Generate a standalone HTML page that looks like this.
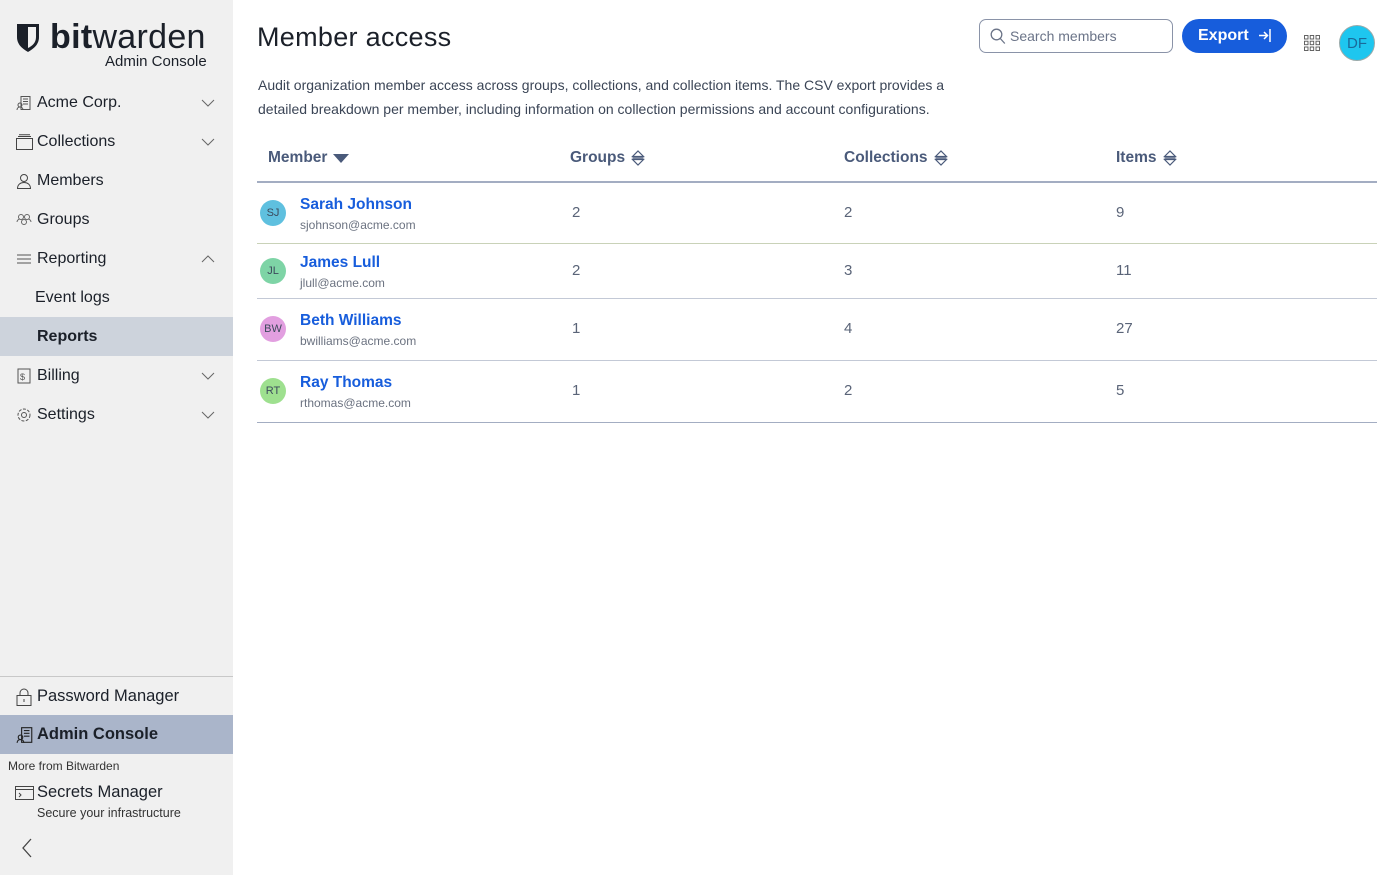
<!DOCTYPE html>
<html><head><meta charset="utf-8"><style>
*{box-sizing:border-box;margin:0;padding:0}
body{width:1400px;height:875px;overflow:hidden;font-family:"Liberation Sans",sans-serif;background:#fff;position:relative;color:#1b2029}
.side{position:absolute;left:0;top:0;width:233px;height:875px;background:#f0f0f0}
.nav{position:absolute;left:0;width:233px;height:39px;display:flex;align-items:center;font-size:16px;color:#1b2029}
.nav svg.i{position:absolute;left:16px}
.nav span{position:absolute;left:37px}
.nav .ch{position:absolute;left:201px}
.main{position:absolute;left:233px;top:0;right:0}
h1{position:absolute;left:24px;top:22px;font-size:27px;font-weight:normal;letter-spacing:.3px;color:#1b2029}
.desc{position:absolute;left:25px;top:74px;font-size:14px;line-height:23.5px;color:#3b4556;width:700px}
.th{position:absolute;top:148px;height:20px;display:flex;align-items:center;gap:6px;font-size:15.5px;font-weight:bold;color:#4a5a7a}
.th svg{display:block}
.row{position:absolute;left:24px;width:1120px;border-bottom:1px solid #c3c9d6}
.av{position:absolute;left:3px;width:26px;height:26px;border-radius:50%;font-size:11px;color:#3c4a5c;display:flex;align-items:center;justify-content:center}
.nm{position:absolute;left:43px;font-size:15.5px;font-weight:bold;color:#175ddc}
.em{position:absolute;left:43px;font-size:12px;color:#6b7280}
.n{position:absolute;font-size:15px;color:#5a6478}
</style></head><body>
<div class="side">
 <svg style="position:absolute;left:16px;top:23px" width="24" height="30" viewBox="0 0 24 30"><path d="M1 1h22v13c0 8-6 12-11 15C7 26 1 22 1 14z" fill="#1b2029"/><path d="M12 4h8v10c0 6-4 9-8 11z" fill="#f0f0f0"/></svg>
 <div style="position:absolute;left:50px;top:18px;font-size:34px;color:#1b2029;letter-spacing:.3px"><b>bit</b>warden</div>
 <div style="position:absolute;left:105px;top:53px;font-size:15px;color:#1b2029">Admin Console</div>
 <div class="nav" style="top:83px"><svg class="i" width="16" height="16" viewBox="0 0 16 16" fill="none" stroke="#555"><rect x="5" y="1.5" width="9" height="13"/><path d="M7 4h5M7 6.5h5M7 9h5"/><circle cx="4" cy="10" r="2"/><path d="M1 15c0-2 1.5-3 3-3s3 1 3 3"/></svg><span>Acme Corp.</span><svg class="ch" width="14" height="8" viewBox="0 0 14 8"><path d="M1 1l6 6 6-6" fill="none" stroke="#666"/></svg></div>
 <div class="nav" style="top:122px"><svg class="i" width="18" height="16" viewBox="0 0 18 16" fill="none" stroke="#444"><rect x=".5" y="4.5" width="16" height="11"/><path d="M2 2.5h13M3 .8h11"/></svg><span>Collections</span><svg class="ch" width="14" height="8" viewBox="0 0 14 8"><path d="M1 1l6 6 6-6" fill="none" stroke="#666"/></svg></div>
 <div class="nav" style="top:161px"><svg class="i" width="16" height="16" viewBox="0 0 16 16" fill="none" stroke="#444"><circle cx="8" cy="5" r="3.5"/><path d="M1.5 15.5c0-4 3-6 6.5-6s6.5 2 6.5 6z"/></svg><span>Members</span></div>
 <div class="nav" style="top:200px"><svg class="i" width="16" height="16" viewBox="0 0 16 16" fill="none" stroke="#666"><circle cx="5" cy="5" r="2.5"/><circle cx="11" cy="5" r="2.5"/><circle cx="8" cy="10" r="2.5"/><path d="M1 10c0-2 2-3 3-3M15 10c0-2-2-3-3-3"/></svg><span>Groups</span></div>
 <div class="nav" style="top:239px"><svg class="i" width="16" height="16" viewBox="0 0 16 16" stroke="#555"><path d="M1 4h14M1 8h14M1 12h14"/></svg><span>Reporting</span><svg class="ch" width="14" height="8" viewBox="0 0 14 8"><path d="M1 7l6-6 6 6" fill="none" stroke="#666"/></svg></div>
 <div class="nav" style="top:278px"><span style="left:35px">Event logs</span></div>
 <div class="nav" style="top:317px;background:#cdd3dc"><span style="font-weight:bold">Reports</span></div>
 <div class="nav" style="top:356px"><svg class="i" width="16" height="16" viewBox="0 0 16 16" fill="none" stroke="#555"><rect x="2" y="1" width="12" height="14"/><text x="4" y="12" font-size="9" fill="#555" stroke="none">$</text></svg><span>Billing</span><svg class="ch" width="14" height="8" viewBox="0 0 14 8"><path d="M1 1l6 6 6-6" fill="none" stroke="#666"/></svg></div>
 <div class="nav" style="top:395px"><svg class="i" width="16" height="16" viewBox="0 0 16 16" fill="none" stroke="#555"><circle cx="8" cy="8" r="2.5"/><circle cx="8" cy="8" r="6" stroke-dasharray="3 1.5"/></svg><span>Settings</span><svg class="ch" width="14" height="8" viewBox="0 0 14 8"><path d="M1 1l6 6 6-6" fill="none" stroke="#666"/></svg></div>
 <div style="position:absolute;left:0;top:676px;width:233px;border-top:1px solid #c8c8c8"></div>
 <div class="nav" style="top:677px"><svg class="i" width="16" height="18" viewBox="0 0 16 18" fill="none" stroke="#444"><rect x="1" y="7.5" width="14" height="10"/><path d="M4 7.5V5a4 4 0 0 1 8 0v2.5M8 11v3"/></svg><span style="font-size:16.5px">Password Manager</span></div>
 <div class="nav" style="top:715px;background:#aab5ca"><svg class="i" width="18" height="18" viewBox="0 0 16 16" fill="none" stroke="#222"><rect x="5" y="1.5" width="9" height="13"/><path d="M7 4h5M7 6.5h5M7 9h5"/><circle cx="4" cy="10" r="2"/><path d="M1 15c0-2 1.5-3 3-3s3 1 3 3"/></svg><span style="font-weight:bold;font-size:16.5px">Admin Console</span></div>
 <div style="position:absolute;left:8px;top:759px;font-size:12px;color:#333">More from Bitwarden</div>
 <svg style="position:absolute;left:15px;top:786px" width="19" height="14" viewBox="0 0 19 14" fill="none" stroke="#444"><rect x=".5" y=".5" width="18" height="13"/><path d="M.5 3.5h18M4 7l2 2-2 2"/></svg>
 <div style="position:absolute;left:37px;top:783px;font-size:16.5px;color:#1b2029">Secrets Manager</div>
 <div style="position:absolute;left:37px;top:806px;font-size:12.5px;color:#333">Secure your infrastructure</div>
 <svg style="position:absolute;left:21px;top:838px" width="12" height="20" viewBox="0 0 12 20"><path d="M10 1L2 10l8 9" fill="none" stroke="#444" stroke-width="1.3"/></svg>
</div>
<div class="main">
 <h1>Member access</h1>
 <div style="position:absolute;left:746px;top:19px;width:194px;height:34px;border:1px solid #8a93a8;border-radius:7px"><svg style="position:absolute;left:10px;top:8px" width="16" height="17" viewBox="0 0 16 17" fill="none" stroke="#6b7488" stroke-width="1.3"><circle cx="6.5" cy="6.5" r="5.3"/><path d="M10.3 10.5l4.5 5"/></svg><div style="position:absolute;left:30px;top:8px;font-size:14px;color:#6b7488">Search members</div></div>
 <div style="position:absolute;left:949px;top:19px;width:105px;height:34px;border-radius:17px;background:#175ddc;color:#fff;font-weight:bold;font-size:16px"><span style="position:absolute;left:16px;top:8px">Export</span><svg style="position:absolute;left:76px;top:9px" width="14" height="15" viewBox="0 0 14 15" fill="none" stroke="#fff" stroke-width="1.5"><path d="M12 1v13M1 7.5h8M6 4l3.5 3.5L6 11"/></svg></div>
 <svg style="position:absolute;left:1071px;top:35px" width="16" height="16" viewBox="0 0 16 16" fill="none" stroke="#555" stroke-width=".9"><rect x=".5" y=".5" width="3.5" height="3.5"/><rect x="6.2" y=".5" width="3.5" height="3.5"/><rect x="12" y=".5" width="3.5" height="3.5"/><rect x=".5" y="6.2" width="3.5" height="3.5"/><rect x="6.2" y="6.2" width="3.5" height="3.5"/><rect x="12" y="6.2" width="3.5" height="3.5"/><rect x=".5" y="12" width="3.5" height="3.5"/><rect x="6.2" y="12" width="3.5" height="3.5"/><rect x="12" y="12" width="3.5" height="3.5"/></svg>
 <div style="position:absolute;left:1106px;top:25px;width:36px;height:36px;border-radius:50%;background:#1ec6ef;border:1px solid #9aa;color:#1a6a9a;font-size:15px;display:flex;align-items:center;justify-content:center">DF</div>
 <div class="desc">Audit organization member access across groups, collections, and collection items. The CSV export provides a detailed breakdown per member, including information on collection permissions and account configurations.</div>
 <div class="th" style="left:35px">Member<svg width="16" height="9" viewBox="0 0 16 9"><path d="M0 0h16L8 9z" fill="#4a5a7a"/></svg></div>
 <div class="th" style="left:337px">Groups<svg width="14" height="16" viewBox="0 0 14 16" fill="none" stroke="#4a5a7a" stroke-width="1.2"><path d="M1.5 6.5L7 1l5.5 5.5zM1.5 9.5L7 15l5.5-5.5zM1.5 8h11"/></svg></div>
 <div class="th" style="left:611px">Collections<svg width="14" height="16" viewBox="0 0 14 16" fill="none" stroke="#4a5a7a" stroke-width="1.2"><path d="M1.5 6.5L7 1l5.5 5.5zM1.5 9.5L7 15l5.5-5.5zM1.5 8h11"/></svg></div>
 <div class="th" style="left:883px">Items<svg width="14" height="16" viewBox="0 0 14 16" fill="none" stroke="#4a5a7a" stroke-width="1.2"><path d="M1.5 6.5L7 1l5.5 5.5zM1.5 9.5L7 15l5.5-5.5zM1.5 8h11"/></svg></div>
 <div style="position:absolute;left:24px;top:181px;width:1120px;border-top:2px solid #a3adc2"></div>
 <div class="row" style="top:183px;height:61px;border-color:#c9d2b8"><div class="av" style="top:17px;background:#5fc0df">SJ</div><div class="nm" style="top:13px">Sarah Johnson</div><div class="em" style="top:35px">sjohnson@acme.com</div><div class="n" style="left:315px;top:21px">2</div><div class="n" style="left:587px;top:21px">2</div><div class="n" style="left:859px;top:21px">9</div></div>
 <div class="row" style="top:244px;height:55px"><div class="av" style="top:14px;background:#7ed4a6">JL</div><div class="nm" style="top:10px">James Lull</div><div class="em" style="top:32px">jlull@acme.com</div><div class="n" style="left:315px;top:18px">2</div><div class="n" style="left:587px;top:18px">3</div><div class="n" style="left:859px;top:18px">11</div></div>
 <div class="row" style="top:299px;height:62px"><div class="av" style="top:17px;background:#e29fe0">BW</div><div class="nm" style="top:13px">Beth Williams</div><div class="em" style="top:35px">bwilliams@acme.com</div><div class="n" style="left:315px;top:21px">1</div><div class="n" style="left:587px;top:21px">4</div><div class="n" style="left:859px;top:21px">27</div></div>
 <div class="row" style="top:361px;height:62px;border-color:#a3adc2"><div class="av" style="top:17px;background:#9ee08f">RT</div><div class="nm" style="top:13px">Ray Thomas</div><div class="em" style="top:35px">rthomas@acme.com</div><div class="n" style="left:315px;top:21px">1</div><div class="n" style="left:587px;top:21px">2</div><div class="n" style="left:859px;top:21px">5</div></div>
</div>
</body></html>
